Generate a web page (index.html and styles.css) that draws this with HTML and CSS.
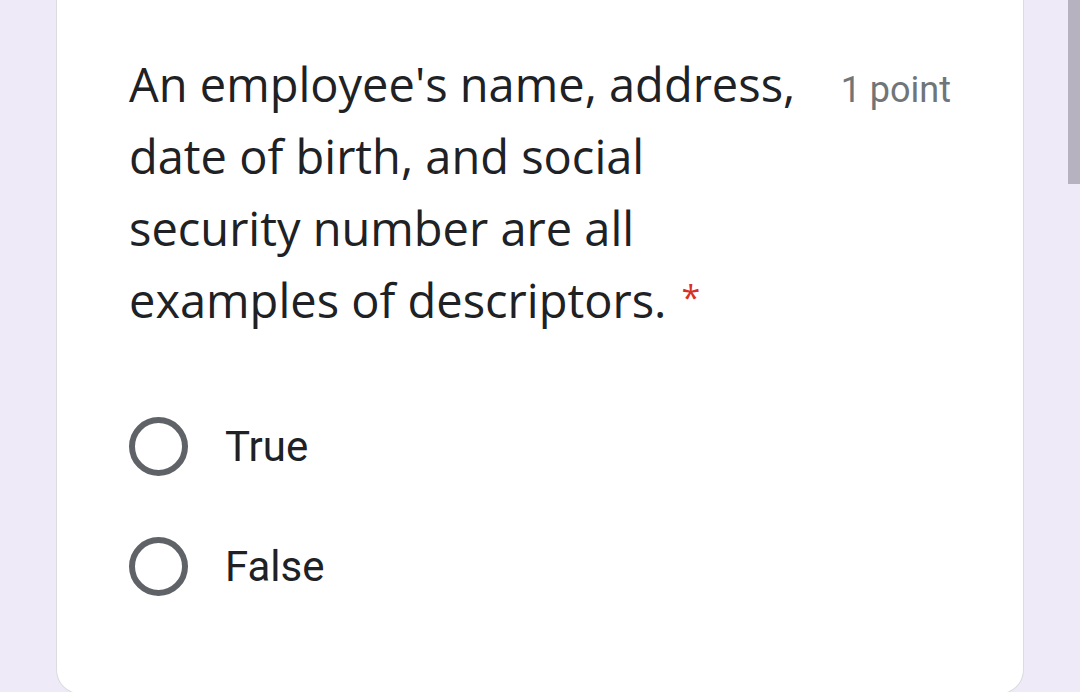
FILE: index.html
```html
<!DOCTYPE html>
<html lang="en">
<head>
<meta charset="utf-8">
<title>Question</title>
<link rel="stylesheet" href="styles.css">
</head>
<body>
<div class="page">
  <div class="card">
    <div class="header">
      <div class="question">An employee's name, address, date of birth, and social security number are all examples of descriptors.<span class="req">*</span></div>
      <div class="points">1 point</div>
    </div>
    <div class="options">
      <label class="option"><span class="radio"></span><span class="label">True</span></label>
      <label class="option"><span class="radio"></span><span class="label">False</span></label>
    </div>
  </div>
  <div class="scrollbar"></div>
</div>
</body>
</html>
```
FILE: styles.css
```css
html, body {
  margin: 0;
  padding: 0;
  height: 100%;
  overflow: hidden;
}
body {
  background: #eeeaf7;
  font-family: "Open Sans", "Liberation Sans", sans-serif;
}
.page {
  position: relative;
  padding-left: 56px;
  height: 692px;
}
.card {
  width: 968px;
  box-sizing: border-box;
  background: #ffffff;
  border: 1px solid #dadce0;
  border-top: none;
  border-radius: 0 0 24px 24px;
  padding: 48px 72px 64px 72px;
  height: 694px;
}
.header {
  display: flex;
  align-items: baseline;
}
.question {
  flex: 1;
  font-size: 47px;
  line-height: 72px;
  color: #202124;
}
.req {
  display: inline-block;
  color: #d93025;
  margin-left: 15px;
  font-size: 34px;
  line-height: 34px;
  vertical-align: 8px;
}
.points {
  margin-left: 36px;
  font-family: Roboto, "Liberation Sans", sans-serif;
  font-size: 36px;
  color: #70757a;
  white-space: nowrap;
}
.options {
  margin-top: 50px;
  display: flex;
  flex-direction: column;
}
.option {
  display: flex;
  align-items: center;
  height: 120px;
}
.radio {
  width: 59px;
  height: 59px;
  box-sizing: border-box;
  border: 6px solid #5f6368;
  border-radius: 50%;
  flex: none;
}
.label {
  margin-left: 37px;
  font-family: Roboto, "Liberation Sans", sans-serif;
  font-size: 42px;
  color: #202124;
}
.scrollbar {
  position: absolute;
  top: 0;
  right: 0;
  width: 12px;
  height: 184px;
  background: #b7b2bf;
}
```
